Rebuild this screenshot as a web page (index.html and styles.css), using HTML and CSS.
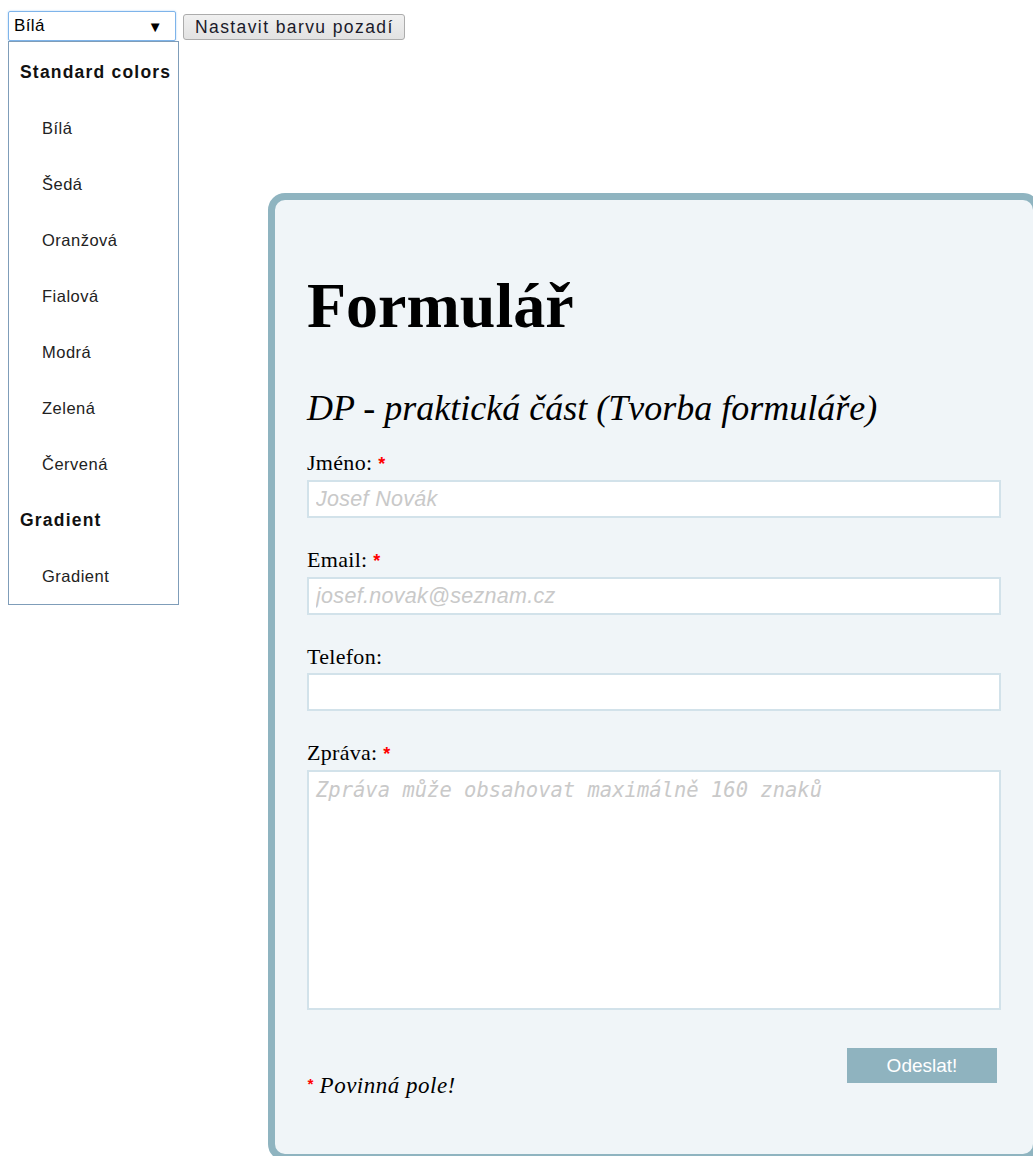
FILE: index.html
```
<!DOCTYPE html>
<html lang="cs">
<head>
<meta charset="utf-8">
<title>Formulář</title>
<link rel="stylesheet" href="styles.css">
</head>
<body class="page">
  <div class="toolbar">
    <div class="picker">
      <span class="picker-value">Bílá</span>
      <span class="picker-arrow">▼</span>
    </div>
    <button class="btn-set" type="button">Nastavit barvu pozadí</button>

    <ul class="picker-list">
      <li class="group">Standard colors</li>
      <li class="option">Bílá</li>
      <li class="option">Šedá</li>
      <li class="option">Oranžová</li>
      <li class="option">Fialová</li>
      <li class="option">Modrá</li>
      <li class="option">Zelená</li>
      <li class="option">Červená</li>
      <li class="group">Gradient</li>
      <li class="option">Gradient</li>
    </ul>
  </div>

  <form class="card">
    <h1 class="title">Formulář</h1>
    <h2 class="subtitle">DP - praktická část (Tvorba formuláře)</h2>

    <div class="field">
      <label class="label" for="jmeno">Jméno: <span class="req">*</span></label>
      <input class="input" id="jmeno" type="text" placeholder="Josef Novák">
    </div>
    <div class="field">
      <label class="label" for="email">Email: <span class="req">*</span></label>
      <input class="input" id="email" type="text" placeholder="josef.novak@seznam.cz">
    </div>
    <div class="field">
      <label class="label" for="telefon">Telefon:</label>
      <input class="input" id="telefon" type="text">
    </div>
    <div class="field">
      <label class="label" for="zprava">Zpráva: <span class="req">*</span></label>
      <textarea class="textarea" id="zprava" placeholder="Zpráva může obsahovat maximálně 160 znaků"></textarea>
    </div>

    <div class="footer">
      <p class="note"><span class="req req-note">*</span> Povinná pole!</p>
      <button class="btn-send" type="button">Odeslat!</button>
    </div>
  </form>
</body>
</html>
```
FILE: styles.css
```
html, body {
  overflow: hidden;
}

.page {
  margin: 0;
  background: #ffffff;
  font-family: "Liberation Serif", "Times New Roman", serif;
  color: #000;
}

/* top bar with the colour picker */
.toolbar {
  position: relative;
  display: flex;
  align-items: flex-start;
  gap: 7px;
  padding: 11px 0 0 8px;
}

.picker {
  box-sizing: border-box;
  width: 168px;
  height: 30px;
  display: flex;
  align-items: center;
  justify-content: space-between;
  padding: 0 12px 0 5px;
  border: 1px solid #7eb4ea;
  border-radius: 2px;
  box-shadow: 0 0 2px #a9cdf2;
  font-family: "Liberation Sans", Arial, sans-serif;
  font-size: 17px;
  letter-spacing: 0.4px;
}

.picker-arrow {
  font-size: 15px;
}

.btn-set {
  box-sizing: border-box;
  height: 26px;
  margin-top: 3px;
  padding: 0 10px 0 11px;
  border: 1px solid #acacac;
  border-radius: 3px;
  background: linear-gradient(#f0f0f0, #e2e2e2);
  font-family: "Liberation Sans", Arial, sans-serif;
  font-size: 17.5px;
  letter-spacing: 1.4px;
  color: #1a1a2a;
}

/* opened option list of the picker */
.picker-list {
  position: absolute;
  top: 41px;
  left: 8px;
  box-sizing: border-box;
  width: 171px;
  margin: 0;
  padding: 2px 0 0;
  list-style: none;
  background: #fff;
  border: 1px solid #7f9db9;
  font-family: "Liberation Sans", Arial, sans-serif;
  font-size: 16.5px;
  letter-spacing: 0.5px;
  color: #222;
  z-index: 2;
}

.picker-list li {
  height: 56px;
  line-height: 56px;
  white-space: nowrap;
}

.picker-list .group {
  padding-left: 11px;
  font-weight: bold;
  font-size: 17.5px;
  letter-spacing: 1.2px;
  color: #111;
}

.picker-list .option {
  padding-left: 33px;
}

/* form card */
.card {
  box-sizing: border-box;
  width: 772px;
  margin: 152px 0 0 268px;
  padding: 74px 32px 56px;
  background: #f0f5f8;
  border: 7px solid #8fb4c0;
  border-radius: 17px;
}

.title {
  margin: 0;
  font-size: 64px;
  line-height: 64px;
  font-weight: bold;
}

.subtitle {
  margin: 50px 0 23px;
  font-size: 36px;
  line-height: 40px;
  font-weight: normal;
  font-style: italic;
}

.field {
  margin-bottom: 30px;
}

.label {
  display: block;
  margin-bottom: 4px;
  font-size: 22px;
  line-height: 24px;
  letter-spacing: 0.3px;
}

.req {
  color: #ff0000;
  font-family: "Liberation Sans", Arial, sans-serif;
  font-weight: bold;
  font-size: 18px;
}

.input,
.textarea {
  display: block;
  box-sizing: border-box;
  width: 694px;
  margin: 0;
  background: #fff;
  border: 2px solid #d2e2ea;
  outline: none;
}

.input {
  height: 38px;
  padding: 0 7px;
  font-family: "Liberation Sans", Arial, sans-serif;
  font-size: 21.5px;
  letter-spacing: 0.3px;
  font-style: italic;
}

.textarea {
  height: 240px;
  padding: 6px 7px;
  resize: none;
  font-family: "DejaVu Sans Mono", monospace;
  font-size: 20.5px;
  font-style: italic;
}

.input::placeholder,
.textarea::placeholder {
  color: #c9c9c9;
}

/* the last field's bottom margin collapses with this one */
.footer {
  display: flex;
  justify-content: space-between;
  align-items: flex-start;
  margin-top: 38px;
}

.note {
  margin: 24px 0 0;
  font-size: 23px;
  line-height: 24px;
  letter-spacing: 0.5px;
  font-style: italic;
}

.req-note {
  font-size: 15px;
  vertical-align: 4px;
}

.btn-send {
  width: 150px;
  height: 35px;
  margin-right: 4px;
  border: none;
  background: #8fb3bf;
  color: #fff;
  font-family: "Liberation Sans", Arial, sans-serif;
  font-size: 19px;
}
```
